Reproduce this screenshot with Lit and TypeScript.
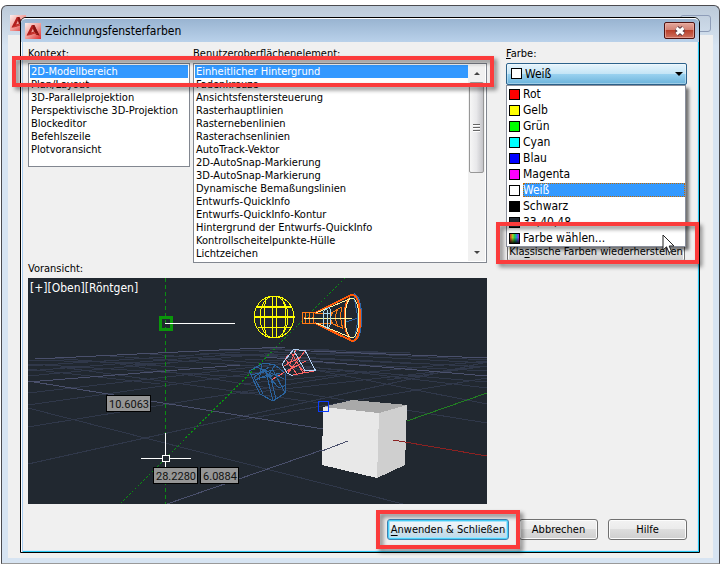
import { LitElement, html, css, svg } from "lit";
import { customElement, property } from "lit/decorators.js";

const contexts = [
  "2D-Modellbereich",
  "Plan/Layout",
  "3D-Parallelprojektion",
  "Perspektivische 3D-Projektion",
  "Blockeditor",
  "Befehlszeile",
  "Plotvoransicht",
];

const elements = [
  "Einheitlicher Hintergrund",
  "Fadenkreuze",
  "Ansichtsfenstersteuerung",
  "Rasterhauptlinien",
  "Rasternebenlinien",
  "Rasterachsenlinien",
  "AutoTrack-Vektor",
  "2D-AutoSnap-Markierung",
  "3D-AutoSnap-Markierung",
  "Dynamische Bemaßungslinien",
  "Entwurfs-QuickInfo",
  "Entwurfs-QuickInfo-Kontur",
  "Hintergrund der Entwurfs-QuickInfo",
  "Kontrollscheitelpunkte-Hülle",
  "Lichtzeichen",
];

const colors = [
  { name: "Rot", value: "#ff0000" },
  { name: "Gelb", value: "#ffff00" },
  { name: "Grün", value: "#00ff00" },
  { name: "Cyan", value: "#00ffff" },
  { name: "Blau", value: "#0000ff" },
  { name: "Magenta", value: "#ff00ff" },
  { name: "Weiß", value: "#ffffff" },
  { name: "Schwarz", value: "#000000" },
  { name: "33,40,48", value: "#212830" },
  {
    name: "Farbe wählen...",
    value:
      "linear-gradient(#0000 40%, #000d), linear-gradient(90deg, #d22, #ac2 30%, #2c4 50%, #28d 75%, #a2d)",
  },
];

@customElement("app-logo")
class AppLogo extends LitElement {
  static styles = css`
    :host { display: block; width: 16px; height: 16px; flex: none; }
    svg { display: block; }
  `;
  render() {
    return html`<svg width="16" height="16" viewBox="0 0 16 16" aria-hidden="true">
      <defs>
        <linearGradient id="g" x1="0" y1="0" x2="1" y2="1">
          <stop offset="0" stop-color="#fdeeec" /><stop offset="0.5" stop-color="#f2a19c" /><stop offset="1" stop-color="#dd2a2c" />
        </linearGradient>
      </defs>
      <rect width="16" height="16" fill="url(#g)" />
      <path d="M1.500 12.500 L6.800 2 H9.300 L14.500 12.500 L11 11.600 L9.600 9 L5.600 12 Z" fill="#b3201e" />
      <path d="M8 2 H9.300 L14.500 12.500 L11 11.600 L8.600 7 Z" fill="#861412" />
      <path d="M7.800 5.800 L9 8.400 L6.200 9.600 Z" fill="#efaaa4" />
      <path d="M1.500 12.500 L8.500 9 L13 11 L9.500 10.800 L5.600 12 Z" fill="#c93530" />
    </svg>`;
  }
}

@customElement("scene-preview")
class ScenePreview extends LitElement {
  static styles = css`
    :host { display: block; }
    svg { display: block; width: 100%; height: auto; background: #212830; font-family: "DejaVu Sans Condensed", "Noto Sans", sans-serif; }
    .minor { stroke: #30384a; }
    .major { stroke: #4a506c; }
    .view { font-size: 12px; fill: #fff; }
    .tip { font-family: Roboto, sans-serif; font-size: 11px; fill: #111; text-anchor: middle; }
  `;

  private minor = [
    [28, 366, 240, 352], [28, 371, 240, 354], [28, 376, 285, 352], [28, 393, 280, 364], [28, 405, 290, 368],
    [28, 427, 340, 376], [28, 464, 487, 362], [28, 360, 170, 364], [28, 364, 260, 378], [50, 358, 300, 376],
    [28, 369, 160, 384], [110, 356, 340, 372], [28, 408, 403, 504], [150, 354, 487, 382], [120, 364, 487, 423],
    [60, 367, 320, 403], [240, 350, 487, 363], [240, 354, 487, 367], [245, 359, 487, 371], [270, 362, 487, 388],
    [300, 367, 487, 404], [240, 384, 487, 361], [240, 394, 487, 366], [240, 420, 487, 378], [387, 380, 487, 366],
    [200, 353, 420, 364], [250, 348, 410, 353], [210, 351, 330, 349], [220, 356, 400, 352], [290, 350, 487, 360],
  ];
  private major = [
    [35, 359, 240, 349], [28, 382, 240, 365], [28, 381, 323, 429], [240, 349, 285, 347], [285, 350, 487, 358],
    [265, 357, 487, 376], [167, 504, 348, 441],
  ];

  render() {
    const line = (p: number[]) => svg`<line x1=${p[0]} y1=${p[1]} x2=${p[2]} y2=${p[3]} />`;
    return html`<svg viewBox="28 278 459 226" role="img" aria-label="Voransicht" fill="none" shape-rendering="crispEdges">
      <g class="minor">${this.minor.map(line)}</g>
      <g class="major">${this.major.map(line)}</g>
      <path d="M165.500 278 V504" stroke="#0a8f12" stroke-dasharray="4 3" />
      <path d="M345 278 L120 504" stroke="#0a8f12" stroke-dasharray="2 2" />

      <g stroke="#ffff00">
        <ellipse cx="274" cy="317" rx="20" ry="21" />
        <ellipse cx="274" cy="317" rx="14" ry="21" />
        <path d="M266 298 Q262 317 266 336 M282 298 Q290 317 282 336" />
        <path d="M272.500 296 V338 M276.500 296 V338 M258 327.500 H291" />
        <path d="M256 307 H292 M254 317 H295" stroke-width="2" />
      </g>

      <path d="M354 294 Q361 297 361 318 Q361 338 354 341" stroke="#2f66a8" stroke-width="2" />
      <path d="M354 297 L358 318 L346 322 M358 318 L355 338" stroke="#2f66a8" />
      <g stroke="#ff7a14">
        <path d="M303 312.500 H316 M303 323.500 H316 M302.500 312 V324 M306 312 Q304 318 306 323 M310 312 Q308 318 310 323 M314 312 Q312 318 314 323 M316 313 H331 M316 323 H331" />
        <path d="M331 313 L342 307 M331 323 L342 328 M333 312 Q328 318 333 324 M338 309 Q333 318 338 326 M342 307 Q339 318 343 329 M345 307 V329" />
      </g>
      <g stroke="#ff5a0a">
        <path d="M315 313 L351 295 Q360 294 360 318 Q360 341 352 341 L315 323" stroke-width="2" />
        <path d="M350 297 Q344 302 344 318 Q344 334 351 340" />
      </g>
      <path d="M316 313 L352 298 M316 323 L352 338 M304 318.500 H352" stroke="#fff6a0" />
      <ellipse cx="352" cy="318" rx="7" ry="20" stroke="#fff6a0" />
      <path d="M324 311 L329 307 L331 311 L330 325 L328 329 L323 325 Z M327 310 V327 M323 313 H330" stroke="#a9d6ee" />

      <path d="M288 355 L282 365 M291 352 L303 373 M286 360 L297 374 M284 366 L300 357 M287 371 L306 361 M296 350 L289 366 M305 351 L288 373 M293 375 L314 371 M271 380 L292 368 M298 365 L305 372" stroke="#ff6464" />
      <path d="M282 364 L293.500 349.500 L305 350.500 L315.500 370.500 H305 L294 351 M282 364 L287 373 L293 376" stroke="#b4d2f5" />
      <g stroke="#2b649f">
        <path d="M249 371 L264 363 L275 365 L285 373 L285 393 L273 401 L260 394 Z" />
        <path d="M250 375 L274 370 M256 366 L272 377 M262 364 L259 380 M269 367 L254 377 L263 394 M255 380 L270 374 L276 399 M275 365 L268 376 L279 388 L286 385 M260 368 L284 379 M266 372 L273 401 M263 378 L280 373 M272 368 L285 393" />
      </g>

      <path d="M407 421 L487 393" stroke="#228022" />
      <path d="M323 407 L379 413 L377 478 L322 465 Z" fill="#e8e8e8" />
      <path d="M379 413 L407 405 L405 465 L377 478 Z" fill="#cfcfcf" />
      <path d="M323 407 L352 400 L407 405 L379 413 Z" fill="#a9a9a9" />
      <path d="M322 451 L348 441" stroke="#4a506c" />
      <path d="M393 440 L487 456" stroke="#8c2222" />
      <rect x="318.500" y="401.500" width="10" height="10" stroke="#0a3cff" />

      <rect x="160.500" y="317.500" width="11" height="12" stroke="#0a960a" stroke-width="3" />
      <path d="M165 323.500 H235 M141 458.500 H191 M165.500 433 V468" stroke="#fff" />
      <rect x="162.500" y="455.500" width="7" height="6" stroke="#fff" fill="#212830" />

      <g fill="#969696" stroke="#000">
        <rect x="106.500" y="395.500" width="44" height="16" />
        <rect x="153.500" y="467.500" width="44" height="16" />
        <rect x="200.500" y="467.500" width="38" height="16" />
      </g>
      <text class="tip" x="129" y="408">10.6063</text>
      <text class="tip" x="176" y="480">28.2280</text>
      <text class="tip" x="220" y="480">6.0884</text>
      <text class="view" x="30" y="292">[+][Oben][Röntgen]</text>
    </svg>`;
  }
}

@customElement("color-picker")
class ColorPicker extends LitElement {
  @property() value = "Weiß";

  static styles = css`
    :host { display: block; position: relative; font-size: 12px; }
    label { display: block; font-size: 11px; line-height: 12px; margin-bottom: 3px; }
    .combo { position: relative; }
    select {
      display: block; width: 100%; height: 22px; padding: 0 18px; margin: 0;
      appearance: none; font: inherit; color: #000; outline: none;
      border: 1px solid #2c628b; border-radius: 2px;
      background: linear-gradient(#e8f5fc, #c4e5f6 48%, #98d1ef 52%, #6cb3db);
      box-shadow: inset 0 0 0 1px #ffffff55;
    }
    .swatch { flex: none; box-sizing: border-box; width: 11px; height: 11px; border: 1px solid #000; }
    .current { position: absolute; left: 5px; top: 5px; background: #fff; pointer-events: none; }
    .arrow { position: absolute; right: 4px; top: 9px; border: 4px solid transparent; border-top-color: #000; border-bottom: 0; pointer-events: none; }
    ul {
      position: absolute; z-index: 1; left: 0; right: 1px; top: 100%; margin: 0; padding: 0; list-style: none;
      background: #fff; border: 1px solid #8a8f9c; box-shadow: 3px 3px 3px #0008;
    }
    li { display: flex; align-items: center; gap: 3px; height: 16px; padding-left: 2px; line-height: 14px; }
    .name { flex: 1; }
    .selected .name { background: #3399ff; color: #fff; outline: 1px dotted #c46a00; outline-offset: -1px; }
  `;

  render() {
    return html`
      <label for="color"><u>F</u>arbe:</label>
      <div class="combo">
        <select id="color">
          ${colors.map((c) => html`<option ?selected=${c.name === this.value}>${c.name}</option>`)}
        </select>
        <span class="swatch current"></span>
        <span class="arrow"></span>
        <ul role="listbox" aria-label="Farbe">
          ${colors.map(
            (c) => html`<li role="option" class=${c.name === this.value ? "selected" : ""} aria-selected=${c.name === this.value}>
              <span class="swatch" style="background:${c.value}"></span><span class="name">${c.name}</span>
            </li>`,
          )}
        </ul>
      </div>`;
  }
}

@customElement("app-root")
class AppRoot extends LitElement {
  static styles = css`
    :host {
      display: block; box-sizing: border-box; min-height: 100vh; padding: 5px 0 0 1px; background: #fff;
      font-family: "DejaVu Sans Condensed", "Noto Sans", sans-serif; font-size: 11px; color: #000;
    }
    * { box-sizing: border-box; }
    u { text-underline-offset: 2px; }
    .outer {
      position: relative; padding: 11px 19px 10px 18px; border: 1px solid #4b4b50; border-bottom-color: #999;
      border-radius: 6px 6px 0 0; background: linear-gradient(#bccad9, #d7e4f2 40px);
    }
    .behind { position: absolute; inset: 29px 6px 5px 6px; background: #f0f0f0; }
    .behind-logo { position: absolute; left: 8px; top: 9px; }
    .behind-close { position: absolute; right: 8px; top: 9px; width: 31px; height: 17px; border: 1px solid #8e9db8; border-radius: 3px; }
    .dialog {
      position: relative; border: 1px solid #000; border-radius: 6px 6px 0 0; background: #f0f0f0;
      box-shadow: inset 1px 0 #fff, inset 2px 0 #a9cdf0, inset -1px -1px #29c8f0, inset -2px -2px #d8e8f8;
    }
    header {
      display: flex; align-items: center; gap: 4px; height: 24px; padding: 0 4px; font-size: 12px;
      border-top: 1px solid #fff; border-radius: 5px 5px 0 0; background: linear-gradient(#99b4d1, #b9d1ea);
    }
    h1 { flex: 1; margin: 0; font-size: 12px; font-weight: 400; line-height: 16px; }
    .close {
      display: grid; place-items: center; width: 31px; height: 17px; padding: 0; border: 1px solid #4e1312; border-radius: 2px;
      background: linear-gradient(#e3a79c, #d28275 45%, #b9402b 50%, #cf7260); box-shadow: inset 0 0 0 1px #f0b8ae99;
    }
    .body { padding: 6px 12px 12px 7px; }
    .columns { display: grid; grid-template-columns: minmax(0, 1fr) 181px; gap: 19px; }
    .lists { position: relative; display: grid; grid-template-columns: 162px minmax(0, 1fr); gap: 3px; align-items: start; }
    .label { display: block; line-height: 12px; margin-bottom: 3px; }
    .box { display: flex; border: 1px solid #828790; background: #fff; padding: 1px; }
    .box select {
      flex: 1; min-width: 0; width: 100%; margin: 0; padding: 0; border: 0; outline: none; background: #fff;
      font: inherit; overflow: hidden; border-radius: 0; scrollbar-width: none;
    }
    .box option { height: 13px; min-height: 13px; padding: 0 1px; line-height: 13px; color: #000; }
    .box option:checked { color: #fff !important; background: #3399ff linear-gradient(#3399ff, #3399ff); }
    .short { height: 104px; }
    .long { height: 200px; }
    .bar { display: flex; flex-direction: column; align-items: center; width: 17px; background: #f1f1f1; }
    .up, .down { border: 3px solid transparent; margin: 7px 0; }
    .up { border-bottom-color: #444; border-top: 0; }
    .down { border-top-color: #444; border-bottom: 0; margin-top: auto; }
    .thumb {
      display: grid; place-items: center; width: 15px; height: 91px; border: 1px solid #979797; border-radius: 2px;
      background: linear-gradient(90deg, #f6f6f6, #e8e8ea 50%, #c4c4c8);
    }
    .grip { width: 7px; height: 8px; background: repeating-linear-gradient(#666 0 1px, #fff 1px 2px, transparent 2px 3px); }
    .push {
      height: 21px; padding: 0; border: 1px solid #707070; border-radius: 3px; font: inherit; color: #000; white-space: nowrap;
      background: linear-gradient(#f2f2f2, #ebebeb 49%, #dddddd 50%, #cfcfcf); box-shadow: inset 0 0 0 1px #fcfcfc;
    }
    .side { position: relative; }
    .restore { display: block; width: 178px; margin: 156px 0 0 1px; }
    .actions { display: flex; justify-content: flex-end; gap: 10px; margin-top: 15px; }
    .actions .push { width: 79px; }
    .primary-wrap { position: relative; display: flex; }
    .actions .primary {
      width: 122px; border-color: #3c7fb1; box-shadow: inset 0 0 0 1px #48d0f8, inset 0 0 0 2px #a8e4fb;
      background: linear-gradient(#f0f6fa, #e6eff5 49%, #cfe3ee 50%, #bfd9e8);
    }
    .callout { position: absolute; z-index: 3; border: 4px solid #fb3b3b; filter: drop-shadow(3px 3px 2px #0007); pointer-events: none; }
    .on-lists { inset: 8px -7px auto -16px; height: 31px; }
    .on-choose { left: -10px; right: -12px; bottom: -2px; height: 42px; }
    .on-apply { inset: -9px -11px -9px -11px; }
    .cursor { position: absolute; z-index: 4; right: 11px; bottom: 8px; }
  `;

  render() {
    return html`
      <div class="outer">
        <div class="behind"></div>
        <app-logo class="behind-logo"></app-logo>
        <span class="behind-close"></span>
        <section class="dialog" role="dialog" aria-labelledby="title">
          <header>
            <app-logo></app-logo>
            <h1 id="title">Zeichnungsfensterfarben</h1>
            <button class="close" aria-label="Schließen">
              <svg width="12" height="10" viewBox="0 0 12 10">
                <path d="M2.500 2 L9.500 8 M9.500 2 L2.500 8" stroke="#5a3a44" stroke-width="5" />
                <path d="M2.500 2 L9.500 8 M9.500 2 L2.500 8" stroke="#fff" stroke-width="3" />
              </svg>
            </button>
          </header>
          <div class="body">
            <div class="columns">
              <div>
                <div class="lists">
                  <div>
                    <label class="label" for="context">Konte<u>x</u>t:</label>
                    <div class="box short">
                      <select id="context" size="7">
                        ${contexts.map((t, i) => html`<option ?selected=${i === 0}>${t}</option>`)}
                      </select>
                    </div>
                  </div>
                  <div>
                    <label class="label" for="element"><u>B</u>enutzeroberflächenelement:</label>
                    <div class="box long">
                      <select id="element" size="15">
                        ${elements.map((t, i) => html`<option ?selected=${i === 0}>${t}</option>`)}
                      </select>
                      <div class="bar" aria-hidden="true">
                        <span class="up"></span>
                        <span class="thumb"><span class="grip"></span></span>
                        <span class="down"></span>
                      </div>
                    </div>
                  </div>
                  <div class="callout on-lists"></div>
                </div>
                <span class="label">Voransicht:</span>
                <scene-preview></scene-preview>
              </div>
              <div>
                <div class="side">
                  <color-picker></color-picker>
                  <button class="push restore">Kla<u>s</u>sische Farben wiederherstellen</button>
                  <div class="callout on-choose"></div>
                  <svg class="cursor" width="14" height="20" viewBox="0 0 14 20" aria-hidden="true">
                    <path d="M1 1 V16 L4.500 12.800 L7 18.500 L9.500 17.400 L7.200 12 L12 12 Z" fill="#fff" stroke="#222" />
                  </svg>
                </div>
              </div>
            </div>
            <div class="actions">
              <div class="primary-wrap">
                <button class="push primary"><u>A</u>nwenden &amp; Schließen</button>
                <div class="callout on-apply"></div>
              </div>
              <button class="push">Abbrechen</button>
              <button class="push">Hilfe</button>
            </div>
          </div>
        </section>
      </div>`;
  }
}
